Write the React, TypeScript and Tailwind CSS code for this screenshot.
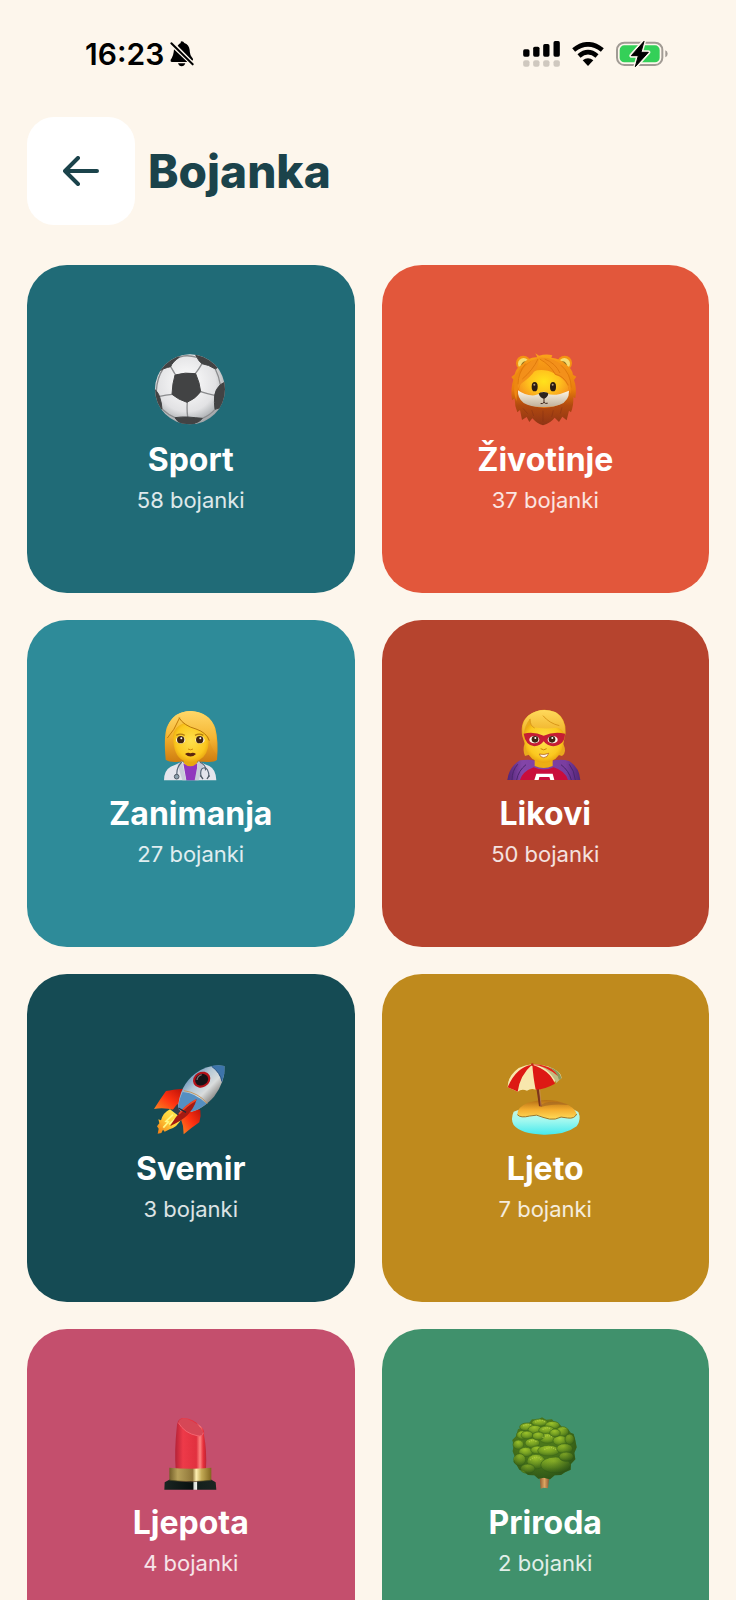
import type { ReactNode } from "react";

const SoccerBall = () => (
  <>
    <defs>
      <radialGradient id="ball" cx="0.45" cy="0.4" r="0.6">
        <stop offset="0" stopColor="#ffffff" />
        <stop offset="0.7" stopColor="#e2e2e4" />
        <stop offset="1" stopColor="#a3a7aa" />
      </radialGradient>
      <clipPath id="ballClip">
        <circle cx="209" cy="145" r="105" />
      </clipPath>
    </defs>
    <circle cx="209" cy="145" r="105" fill="url(#ball)" />
    <g clipPath="url(#ballClip)">
      <path
        d="M165 101L151 77M225 98Q236 84 245 68M241 152Q262 159 283 163M201 183Q199 205 202 228M156 160Q137 162 118 166M125 204Q144 222 164 230M246 232Q270 222 284 205M285 84Q296 106 300 131M178 48Q200 40 230 49M128 84Q110 110 108 150"
        fill="none"
        stroke="#8b8c8e"
        strokeWidth="4"
      />
      <g fill="#424344" stroke="#424344" strokeWidth="3" strokeLinejoin="round">
        <path d="M164 102Q195 93 226 98Q238 124 241 152Q226 173 200 184Q174 176 155 160Q156 128 164 102Z" />
        <path d="M222 35L230 49Q235 61 245 68Q265 71 285 84L305 70L270 30Z" />
        <path d="M320 120L300 131Q285 145 283 163Q281 185 284 205L300 200L325 170Z" />
        <path d="M164 230Q185 227 202 228Q225 230 246 232Q240 242 225 246L202 258L180 246Q170 240 164 230Z" />
        <path d="M98 140L108 150Q116 160 118 168Q124 186 125 204L110 205L95 180Z" />
        <path d="M110 95L128 84Q143 78 151 77Q155 64 178 48L150 40L110 70Z" />
      </g>
    </g>
  </>
);

const Lion = () => (
  <>
    <defs>
      <linearGradient id="mane" x1="0" y1="0" x2="0" y2="1">
        <stop offset="0" stopColor="#fba31a" />
        <stop offset="0.5" stopColor="#e97d0c" />
        <stop offset="0.72" stopColor="#b24a0f" />
        <stop offset="1" stopColor="#8f3415" />
      </linearGradient>
      <radialGradient id="lionFace" cx="0.5" cy="0.3" r="0.6">
        <stop offset="0" stopColor="#ffe21c" />
        <stop offset="0.5" stopColor="#ffc21d" />
        <stop offset="1" stopColor="#f48a1c" />
      </radialGradient>
      <linearGradient id="muzzle" x1="0" y1="0" x2="0" y2="1">
        <stop offset="0" stopColor="#fff8e6" />
        <stop offset="1" stopColor="#bfae98" />
      </linearGradient>
    </defs>
    <circle cx="191" cy="66" r="22" fill="#f49312" />
    <circle cx="192" cy="68" r="17" fill="#f5dc72" />
    <circle cx="198" cy="75" r="14" fill="#94701b" />
    <circle cx="315" cy="66" r="22" fill="#f49312" />
    <circle cx="314" cy="68" r="17" fill="#f5dc72" />
    <circle cx="308" cy="75" r="14" fill="#94701b" />
    <path
      d="M227 37L238 44Q260 38 278 43L275 50Q302 52 318 70Q337 83 340 101L350 107L343 117Q352 140 347 172L341 168Q342 194 334 214L328 209L321 238L308 227L298 243L285 230Q273 246 250 253Q232 248 218 232L209 243L201 228L187 237L181 207L173 214Q165 195 165 172L157 178Q152 142 161 116L155 108L165 100Q168 82 189 69Q207 47 233 49Z"
      fill="url(#mane)"
    />
    <path d="M178 145Q184 104 232 88Q260 84 283 97Q324 112 328 150Q326 197 253 200Q184 199 178 145Z" fill="url(#lionFace)" />
    <path d="M175 148Q197 165 225 163Q238 162 246 154Q254 150 262 156Q279 170 328 149Q329 180 300 191Q280 199 254 198Q216 200 192 186Q173 172 175 148Z" fill="url(#muzzle)" />
    <path d="M237 158Q240 153 252 153Q264 154 266 158Q264 169 253 173Q242 171 237 158Z" fill="#2e2520" />
    <path d="M253 172V184M244 188Q250 189 253 184Q257 189 263 187" fill="none" stroke="#40281c" strokeWidth="3" strokeLinecap="round" />
    <ellipse cx="225" cy="137" rx="9" ry="14" fill="#2c1c12" />
    <ellipse cx="280" cy="137" rx="9" ry="14" fill="#2c1c12" />
    <circle cx="224" cy="131" r="3" fill="#b99a79" />
    <circle cx="279" cy="131" r="3" fill="#b99a79" />
    <path d="M236 50Q190 66 176 125Q171 155 170 180Q157 145 168 104Q185 68 236 50Z" fill="#ee8712" />
    <path d="M237 50Q240 88 187 126Q177 134 174 150Q168 77 237 50ZM236 50Q275 70 286 101Q322 112 332 158Q337 112 315 78Q280 47 236 50Z" fill="#f3901a" />
    <path d="M235 54Q219 88 188 114M240 54Q272 72 287 100Q312 104 326 133M198 68Q176 94 175 130M304 73Q333 97 335 140M255 54Q287 66 301 96" fill="none" stroke="#dc760a" strokeWidth="2.5" />
    <path d="M190 202L204 218M216 207L222 225M250 209V242M281 208L276 228M307 199L302 218" stroke="#7e2e14" strokeWidth="2" opacity="0.6" />
  </>
);

const Doctor = () => (
  <>
    <defs>
      <linearGradient id="docHair" x1="0" y1="0" x2="0" y2="1">
        <stop offset="0" stopColor="#ffd95a" />
        <stop offset="0.5" stopColor="#f3b02b" />
        <stop offset="1" stopColor="#cf7d10" />
      </linearGradient>
      <linearGradient id="docFringe" x1="0" y1="0" x2="0" y2="1">
        <stop offset="0" stopColor="#ffd768" />
        <stop offset="0.6" stopColor="#f5b735" />
        <stop offset="1" stopColor="#dd9119" />
      </linearGradient>
      <radialGradient id="skin" cx="0.5" cy="0.45" r="0.6">
        <stop offset="0" stopColor="#ffe04d" />
        <stop offset="0.7" stopColor="#fbc81f" />
        <stop offset="1" stopColor="#e39a0b" />
      </radialGradient>
    </defs>
    <path d="M196 193Q190 125 199 97Q219 48 272 47Q329 51 345 99Q355 137 350 194Q341 202 310 199L236 199Q209 202 196 193Z" fill="url(#docHair)" />
    <path d="M250 183H291V215L271 238L250 215Z" fill="#e9a70e" />
    <path d="M191 255Q191 225 211 214L247 199L271 227L294 199L327 212Q347 222 348 255Z" fill="#e4e5ec" />
    <path d="M249 204Q270 222 291 204L288 255H258Z" fill="#9137bd" />
    <path d="M245 198L257 255H246L231 206ZM294 198L283 255H295L311 205Z" fill="#c8cbd8" />
    <path d="M218 123Q220 94 252 83L310 87Q326 112 325 140Q324 180 296 195Q271 207 247 195Q219 180 218 123Z" fill="url(#skin)" />
    <path d="M237 64Q222 103 199 128Q197 88 218 67Q238 47 272 47Q316 51 335 80Q350 112 350 178Q332 158 326 130Q319 111 281 99Q250 86 237 64Z" fill="url(#docFringe)" />
    <path d="M236 67Q250 91 287 101Q319 112 327 136" fill="none" stroke="#b9770f" strokeWidth="3" />
    <path d="M238 67Q222 106 201 128" fill="none" stroke="#c47b0b" strokeWidth="3" />
    <path d="M228 120Q240 113 253 120M284 120Q297 113 309 120" fill="none" stroke="#b37a10" strokeWidth="4" />
    <ellipse cx="241" cy="134" rx="14" ry="11" fill="#fff6df" />
    <ellipse cx="299" cy="134" rx="14" ry="11" fill="#fff6df" />
    <circle cx="241" cy="133" r="11" fill="#412411" />
    <circle cx="298" cy="133" r="11" fill="#412411" />
    <circle cx="243" cy="129" r="3" fill="#fff" />
    <circle cx="300" cy="129" r="3" fill="#fff" />
    <path d="M263 161Q271 166 278 161" fill="none" stroke="#d28c0c" strokeWidth="3" />
    <path d="M254 176Q263 170 270 174Q279 170 287 176Q271 191 254 176Z" fill="#5b2510" />
    <g fill="none" stroke="#566474" strokeWidth="3.5">
      <path d="M244 200Q227 218 230 239M299 201Q319 211 315 225" />
      <path d="M302 244Q298 221 309 218Q325 215 326 245" />
    </g>
    <circle cx="229" cy="244" r="7" fill="#8ca0ad" stroke="#4f5964" strokeWidth="3" />
    <path d="M300 240L308 251M327 240L320 251" stroke="#4f5964" strokeWidth="4" />
  </>
);

const Superhero = () => (
  <>
    <defs>
      <linearGradient id="cape" x1="0" y1="0" x2="1" y2="0">
        <stop offset="0" stopColor="#522577" />
        <stop offset="0.2" stopColor="#8345a8" />
        <stop offset="0.8" stopColor="#7a3da0" />
        <stop offset="1" stopColor="#522577" />
      </linearGradient>
      <linearGradient id="heroHair" x1="0" y1="0" x2="0" y2="1">
        <stop offset="0" stopColor="#ffd95c" />
        <stop offset="1" stopColor="#eeae24" />
      </linearGradient>
      <radialGradient id="heroSkin" cx="0.5" cy="0.45" r="0.6">
        <stop offset="0" stopColor="#ffe04d" />
        <stop offset="0.7" stopColor="#fbc81f" />
        <stop offset="1" stopColor="#e39a0b" />
      </radialGradient>
    </defs>
    <path d="M113 254Q118 214 151 195Q190 188 222 205Q264 187 298 197Q329 215 332 254Z" fill="url(#cape)" />
    <path d="M151 254Q158 229 192 216Q222 229 252 216Q287 227 295 254Z" fill="#c90d3c" />
    <path d="M194 254L200 235H249L254 254H242L239 245H209L207 254Z" fill="#fff" />
    <path d="M195 181H249V212Q222 224 195 212Z" fill="#edae14" />
    <path d="M158 123Q149 78 181 57Q218 33 259 51Q290 70 288 112L281 145Q293 172 277 182L257 176H186L166 182Q158 165 165 144Z" fill="#e9a91d" />
    <path d="M164 118Q164 79 214 80Q275 77 282 119Q283 170 257 191Q223 213 188 191Q163 170 164 118Z" fill="url(#heroSkin)" />
    <path d="M182 69Q163 91 162 121Q151 84 175 61Q211 34 256 50Q291 70 285 120Q278 99 262 97Q225 102 190 96Q179 86 182 69Z" fill="url(#heroHair)" />
    <path d="M181 71Q181 92 195 98M220 61Q239 84 269 91" fill="none" stroke="#d9981a" strokeWidth="3" />
    <path d="M162 115Q193 108 222 121Q252 108 286 115Q286 148 251 153Q232 151 222 138Q212 151 194 153Q167 149 162 115Z" fill="#c51d34" />
    <ellipse cx="194" cy="133" rx="15" ry="11" fill="#fff9e8" />
    <ellipse cx="249" cy="133" rx="15" ry="11" fill="#fff9e8" />
    <circle cx="196" cy="132" r="10" fill="#3f2412" />
    <circle cx="247" cy="132" r="10" fill="#3f2412" />
    <circle cx="197" cy="128" r="3" fill="#fff" />
    <circle cx="248" cy="128" r="3" fill="#fff" />
    <path d="M213 160Q222 167 231 160" fill="none" stroke="#cb850b" strokeWidth="3" />
    <path d="M209 176Q223 180 237 174Q235 186 222 187Q211 186 209 176Z" fill="#fff4e5" stroke="#ab530e" strokeWidth="2" />
    <path d="M144 207Q127 226 127 254M299 207Q314 225 317 254M169 208Q146 226 141 254M274 208Q298 226 305 254" fill="none" stroke="#4a256d" strokeWidth="3" />
  </>
);

const Rocket = () => (
  <>
    <defs>
      <linearGradient id="hull" x1="0" y1="0" x2="1" y2="1">
        <stop offset="0.15" stopColor="#497eaf" />
        <stop offset="0.4" stopColor="#b6c8d5" />
        <stop offset="0.57" stopColor="#dadddd" />
        <stop offset="0.76" stopColor="#807d7a" />
      </linearGradient>
      <linearGradient id="fin" x1="1" y1="0" x2="0" y2="1">
        <stop offset="0" stopColor="#b91008" />
        <stop offset="0.5" stopColor="#ff3211" />
        <stop offset="1" stopColor="#f98a23" />
      </linearGradient>
      <linearGradient id="flame" x1="1" y1="0" x2="0" y2="1">
        <stop offset="0" stopColor="#fff25c" />
        <stop offset="0.5" stopColor="#ffd13a" />
        <stop offset="1" stopColor="#f27713" />
      </linearGradient>
    </defs>
    <path d="M188 113Q157 116 137 120Q119 145 101 174Q130 169 163 177L188 145Z" fill="url(#fin)" />
    <path d="M240 177Q243 195 237 214Q215 229 190 250Q191 226 181 202L211 169Z" fill="url(#fin)" />
    <path d="M149 175L184 202Q171 229 148 235L133 242L128 236L123 246L112 248L115 233L110 226L117 217L114 205L122 208Q128 185 149 175Z" fill="url(#flame)" />
    <path d="M158 191L137 211L144 213L129 230M163 205L146 220" fill="none" stroke="#fff782" strokeWidth="5" />
    <path d="M171 159L200 184L181 200L157 177Z" fill="#303e49" />
    <path d="M173 172Q177 104 224 68Q264 38 312 45Q316 91 281 137Q239 184 195 184Q180 182 173 172Z" fill="url(#hull)" />
    <path d="M273 45Q291 41 312 45Q315 68 305 92Q298 62 273 45Z" fill="#3d74aa" />
    <path d="M187 123Q226 126 258 158Q232 181 197 184Q182 183 173 172Q175 146 187 123Z" fill="#548fc2" />
    <path d="M191 119Q233 125 261 157" fill="none" stroke="#c59961" strokeWidth="3" />
    <path d="M274 46Q300 65 305 92" fill="none" stroke="#244f80" strokeWidth="3" />
    <ellipse cx="244" cy="86" rx="27" ry="23" transform="rotate(-29 244 86)" fill="#b4131a" />
    <ellipse cx="244" cy="86" rx="20" ry="17" transform="rotate(-29 244 86)" fill="#161317" />
    <path d="M230 87Q231 75 244 71" fill="none" stroke="#78686d" strokeWidth="4" />
    <path d="M229 145Q208 154 186 176Q165 197 149 225Q181 212 201 193Q222 171 229 145Z" fill="#a51a12" />
    <path d="M227 147Q198 163 176 189" fill="none" stroke="#f04827" strokeWidth="5" />
    <path d="M174 171L197 184" stroke="#202b35" strokeWidth="4" />
  </>
);

const BeachUmbrella = () => (
  <>
    <defs>
      <linearGradient id="water" x1="0" y1="0" x2="0" y2="1">
        <stop offset="0" stopColor="#d1f6dc" />
        <stop offset="0.5" stopColor="#a0f8ef" />
        <stop offset="1" stopColor="#46e9ee" />
      </linearGradient>
      <linearGradient id="sand" x1="0" y1="0" x2="0" y2="1">
        <stop offset="0" stopColor="#b36e14" />
        <stop offset="0.5" stopColor="#f5ae2f" />
        <stop offset="1" stopColor="#ffdc5a" />
      </linearGradient>
    </defs>
    <path d="M132 182Q177 163 235 169Q297 163 326 183Q336 206 321 226Q287 252 222 251Q154 249 132 222Q122 204 132 182Z" fill="url(#water)" />
    <path d="M143 191Q142 168 175 155Q218 142 263 150Q313 163 321 189Q315 204 294 201Q273 194 257 204Q241 207 220 199Q202 188 180 195Q153 202 143 191Z" fill="url(#sand)" />
    <path d="M143 191Q153 202 180 195Q202 188 220 199Q241 207 257 204Q273 194 294 201Q315 204 321 189" fill="none" stroke="#9c762b" strokeWidth="3" />
    <path d="M213 164Q222 151 254 152Q280 153 297 162Q246 157 213 168Z" fill="#a66a21" opacity="0.7" />
    <path d="M199 104L208 166H216L206 104Z" fill="#7d351b" />
    <path d="M210 115L214 165" stroke="#cb9163" strokeWidth="2" />
    <path d="M114 109Q113 76 147 51Q166 42 190 39Q243 42 267 64Q277 74 275 82Q263 83 249 97Q238 97 227 108Q210 107 198 116Q184 111 172 119Q156 112 144 122Q129 115 114 109Z" fill="#f8e7ad" />
    <path d="M187 41Q139 48 114 109Q130 115 144 122Q151 72 187 41ZM188 41Q190 74 198 116Q227 114 256 98Q240 57 188 41Z" fill="#dd1914" />
    <path d="M188 41Q236 44 260 96L275 82Q273 59 236 47Z" fill="#c3bb82" />
    <path d="M236 47Q262 60 268 87L275 82Q271 58 236 47Z" fill="#8b995c" />
    <path d="M188 41Q218 37 246 54Q258 62 265 76Q231 44 188 41Z" fill="#e52318" />
    <circle cx="188" cy="41" r="4" fill="#c42516" />
  </>
);

const Lipstick = () => (
  <>
    <defs>
      <linearGradient id="stick" x1="0" y1="0" x2="1" y2="0">
        <stop offset="0" stopColor="#b52237" />
        <stop offset="0.25" stopColor="#ee3a49" />
        <stop offset="0.68" stopColor="#e1303f" />
        <stop offset="0.8" stopColor="#ff8481" />
        <stop offset="0.9" stopColor="#e8303b" />
        <stop offset="1" stopColor="#be2335" />
      </linearGradient>
      <linearGradient id="gold" x1="0" y1="0" x2="1" y2="0">
        <stop offset="0" stopColor="#735f29" />
        <stop offset="0.2" stopColor="#b7a15a" />
        <stop offset="0.55" stopColor="#8f7639" />
        <stop offset="0.64" stopColor="#fff0b1" />
        <stop offset="0.77" stopColor="#c2a954" />
        <stop offset="1" stopColor="#81651f" />
      </linearGradient>
      <linearGradient id="base" x1="0" y1="0" x2="1" y2="0">
        <stop offset="0" stopColor="#1b2522" />
        <stop offset="0.55" stopColor="#07100f" />
        <stop offset="0.57" stopColor="#d4d9d3" />
        <stop offset="0.62" stopColor="#eef0e9" />
        <stop offset="0.64" stopColor="#14201d" />
        <stop offset="1" stopColor="#1b2522" />
      </linearGradient>
    </defs>
    <path d="M166 207Q162 151 169 84Q169 57 185 53Q217 52 244 81Q253 90 251 104Q260 151 257 207Z" fill="url(#stick)" />
    <path d="M174 66Q181 50 202 57Q238 68 249 97Q247 110 230 106Q192 99 174 66Z" fill="#d64756" />
    <path d="M174 67Q193 99 230 106Q247 110 249 97" fill="none" stroke="#f4636f" strokeWidth="3" />
    <path d="M147 202Q212 208 273 202V243H147Z" fill="url(#gold)" />
    <path d="M133 246L147 238Q179 245 212 243Q246 244 273 238L286 246L288 268H132Z" fill="url(#base)" />
    <path d="M147 240Q211 249 273 240" fill="none" stroke="#5b5224" strokeWidth="2" />
  </>
);

const foliage = [
  [172, 80, 22, 12], [210, 67, 24, 11], [248, 75, 22, 12], [196, 88, 21, 13],
  [158, 104, 17, 13], [231, 90, 24, 13], [278, 94, 19, 15], [146, 133, 16, 14],
  [188, 128, 22, 14], [233, 114, 24, 15], [272, 121, 22, 15], [300, 117, 14, 16],
  [168, 155, 21, 14], [203, 149, 20, 12], [237, 151, 33, 16], [285, 145, 24, 15],
  [150, 178, 18, 18], [199, 184, 27, 22], [258, 194, 45, 24], [290, 169, 22, 14],
  [172, 104, 18, 12], [206, 107, 18, 12], [256, 98, 16, 12], [174, 205, 22, 14],
];

const Tree = () => (
  <>
    <defs>
      <radialGradient id="leaf" cx="0.45" cy="0.25" r="0.75">
        <stop offset="0" stopColor="#9cc22b" />
        <stop offset="0.55" stopColor="#759f22" />
        <stop offset="1" stopColor="#48741a" />
      </radialGradient>
      <radialGradient id="treeShade" cx="0.42" cy="0.35" r="0.65">
        <stop offset="0.5" stopColor="#234b14" stopOpacity="0" />
        <stop offset="1" stopColor="#1f4515" stopOpacity="0.65" />
      </radialGradient>
      <linearGradient id="trunk" x1="0" y1="0" x2="1" y2="0">
        <stop offset="0" stopColor="#8c562b" />
        <stop offset="0.5" stopColor="#dca562" />
        <stop offset="1" stopColor="#80502b" />
      </linearGradient>
    </defs>
    <path d="M209 220H240L235 264L222 262L213 265Z" fill="url(#trunk)" />
    <path d="M145 87L155 82L162 69L179 67L187 57L205 58L217 51L229 58L247 57L257 70L272 74L280 85L294 86L303 97L312 101L317 120L321 141L314 158L317 177L303 192L303 208L286 216L274 224L255 225L241 237L223 232L206 235L194 225L175 224L163 213L149 208L141 194L132 185L136 171L129 153L132 135L128 119L139 108Z" fill="#4b771b" />
    {foliage.map(([cx, cy, rx, ry]) => (
      <ellipse key={`${cx}-${cy}`} cx={cx} cy={cy} rx={rx} ry={ry} fill="url(#leaf)" stroke="#3f6b18" strokeWidth="2" />
    ))}
    <g fill="none" stroke="#b5ce4b" strokeWidth="4" strokeDasharray="3 4" opacity="0.8">
      <path d="M161 77Q176 67 187 77M197 66Q213 53 226 66M219 88Q230 76 245 88M178 125Q190 115 202 126M219 112Q235 99 248 111M181 179Q202 162 217 180M224 148Q244 135 261 149" />
    </g>
    <path d="M145 87L155 82L162 69L179 67L187 57L205 58L217 51L229 58L247 57L257 70L272 74L280 85L294 86L303 97L312 101L317 120L321 141L314 158L317 177L303 192L303 208L286 216L274 224L255 225L241 237L223 232L206 235L194 225L175 224L163 213L149 208L141 194L132 185L136 171L129 153L132 135L128 119L139 108Z" fill="url(#treeShade)" />
  </>
);

type Category = {
  id: string;
  name: string;
  count: number;
  color: string;
  viewBox: string;
  art: ReactNode;
};

const categories: Category[] = [
  { id: "sport", name: "Sport", count: 58, color: "bg-[#206b77]", viewBox: "104 39 216 216", art: <SoccerBall /> },
  { id: "zivotinje", name: "Životinje", count: 37, color: "bg-[#e2573b]", viewBox: "148 39 216 216", art: <Lion /> },
  { id: "zanimanja", name: "Zanimanja", count: 27, color: "bg-[#2e8b99]", viewBox: "164 38 216 216", art: <Doctor /> },
  { id: "likovi", name: "Likovi", count: 50, color: "bg-[#b6442e]", viewBox: "118 38 216 216", art: <Superhero /> },
  { id: "svemir", name: "Svemir", count: 3, color: "bg-[#154b54]", viewBox: "104 36 216 216", art: <Rocket /> },
  { id: "ljeto", name: "Ljeto", count: 7, color: "bg-[#bf8a1d]", viewBox: "118 36 216 216", art: <BeachUmbrella /> },
  { id: "ljepota", name: "Ljepota", count: 4, color: "bg-[#c44f6d]", viewBox: "104 50 216 216", art: <Lipstick /> },
  { id: "priroda", name: "Priroda", count: 2, color: "bg-[#40916c]", viewBox: "118 50 216 216", art: <Tree /> },
];

const BellOff = () => (
  <svg viewBox="0 0 72 76" className="h-[26px] w-6" aria-hidden="true">
    <path d="M35 0Q41 0 43 5Q57 10 59 26Q59 41 68 51Q71 55 67 58L23 13Q27 7 32 5Q31 0 35 0Z" fill="#000" />
    <path d="M12 24L53 62H5Q0 61 2 55Q11 44 12 24ZM24 66H46Q43 75 35 75Q27 75 24 66Z" fill="#000" />
    <path d="M4 6L68 69" stroke="#fdf6ec" strokeWidth="12" />
    <path d="M4 6L68 69" stroke="#000" strokeWidth="6" strokeLinecap="round" />
  </svg>
);

const StatusBar = () => (
  <div className="flex h-[108px] shrink-0 items-center justify-between pr-[68px] pl-[85px]">
    <div className="flex items-center gap-[6px]">
      <span className="text-[30px] leading-9 font-semibold text-black">16:23</span>
      <BellOff />
    </div>
    <div className="flex items-center gap-3">
      <svg viewBox="0 0 110 78" className="h-[26px] w-[37px]" aria-label="Signal">
        <g fill="#000">
          <rect x="0" y="25" width="19" height="22" rx="5" />
          <rect x="30" y="17" width="19" height="30" rx="5" />
          <rect x="60" y="9" width="19" height="38" rx="5" />
          <rect x="91" y="0" width="19" height="47" rx="5" />
        </g>
        <g fill="#cfc8bf">
          <rect x="0" y="58" width="19" height="19" rx="6" />
          <rect x="30" y="58" width="19" height="19" rx="6" />
          <rect x="60" y="58" width="19" height="19" rx="6" />
          <rect x="91" y="58" width="19" height="19" rx="6" />
        </g>
      </svg>
      <svg viewBox="0 0 96 72" className="h-6 w-8" aria-label="Wi-Fi">
        <path d="M5 24Q48-10 91 24M21 42Q48 19 75 42" fill="none" stroke="#000" strokeWidth="14" />
        <path d="M32 55Q48 43 64 55L48 72Z" fill="#000" />
      </svg>
      <svg viewBox="0 0 156 78" className="h-[26px] w-[52px]" aria-label="Battery">
        <rect x="3" y="5" width="136" height="67" rx="22" fill="none" stroke="#a19b94" strokeWidth="6" />
        <rect x="11" y="13" width="120" height="51" rx="14" fill="#34d058" />
        <path d="M148 28Q155 31 155 38Q155 46 148 49Z" fill="#a19b94" />
        <path d="M84 1L46 44H67L58 77L97 34H75Z" fill="#000" stroke="#fdf6ec" strokeWidth="12" strokeLinejoin="round" />
        <path d="M84 1L46 44H67L58 77L97 34H75Z" fill="#000" stroke="#000" strokeWidth="3" strokeLinejoin="round" />
      </svg>
    </div>
  </div>
);

const Header = () => (
  <header className="mt-[9px] flex shrink-0 items-center gap-[13px] px-[27px]">
    <button
      type="button"
      aria-label="Natrag"
      className="flex size-[108px] items-center justify-center rounded-[27px] bg-white"
    >
      <svg viewBox="0 0 36 30" className="h-[30px] w-9" fill="none" stroke="#1b434b" strokeWidth="4" strokeLinecap="round" strokeLinejoin="round">
        <path d="M34 15H2M15 2L2 15L15 28" />
      </svg>
    </button>
    <h1 className="text-[46px] leading-14 font-extrabold text-[#1b434b]">Bojanka</h1>
  </header>
);

const CategoryCard = ({ category }: { category: Category }) => (
  <a
    href={`#${category.id}`}
    className={`flex aspect-square flex-col items-center justify-center rounded-[40px] pt-[10px] text-white ${category.color}`}
  >
    <svg viewBox={category.viewBox} className="size-[72px] overflow-visible" aria-hidden="true">
      {category.art}
    </svg>
    <h2 className="mt-[14px] text-[32px] leading-10 font-bold">{category.name}</h2>
    <p className="mt-[6px] text-[22px] leading-7 text-white/85">{category.count} bojanki</p>
  </a>
);

const App = () => (
  <div className="flex h-screen flex-col overflow-hidden bg-[#fdf6ec] font-['Inter','Noto_Sans',sans-serif]">
    <StatusBar />
    <Header />
    <main className="mt-10 grow overflow-y-auto px-[27px] pb-[27px] [scrollbar-width:none]">
      <div className="grid grid-cols-2 gap-[27px]">
        {categories.map((category) => (
          <CategoryCard key={category.id} category={category} />
        ))}
      </div>
    </main>
  </div>
);

export default App;
